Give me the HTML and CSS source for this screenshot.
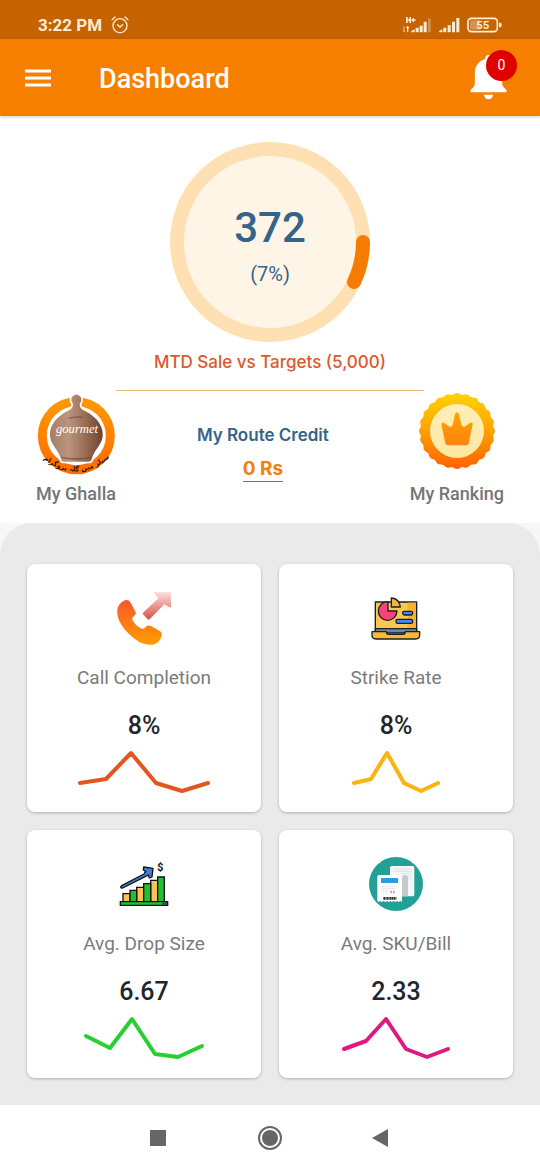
FILE: index.html
```html
<!DOCTYPE html>
<html lang="en">
<head>
<meta charset="utf-8">
<meta name="viewport" content="width=device-width, initial-scale=1">
<title>Dashboard</title>
<link rel="stylesheet" href="styles.css">
</head>
<body>
<div class="status-bar">
  <div class="status-group">
    <span class="status-time">3:22 PM</span>
    <svg class="status-alarm" viewBox="0 0 54 54" aria-hidden="true" fill="none" stroke="currentColor" stroke-width="4" stroke-linecap="round">
      <circle cx="27" cy="29" r="21"/><path d="M19 26l8 7 8-7M3 11l9-8M51 11l-9-8"/>
    </svg>
  </div>
  <div class="status-group">
    <svg class="status-signal-data" viewBox="0 0 87 48" aria-hidden="true" fill="currentColor">
      <path d="M9 0h5v7h5V0h5v18h-5v-7h-5v7H9zM29 3h4v4h5v4h-5v5h-4v-5h-4V7h4zM2 28h2v13h2l-3 5-3-5h2zM12 46V33h-3l5-7 5 7h-3v13z"/>
      <path d="M25 46v-4l10-5v9zM38 46V32h9v14zM50 46V26h9v20zM62 46V14h9v32z"/><path opacity=".35" d="M75 46V4h8v42z"/>
    </svg>
    <svg class="status-signal" viewBox="0 0 63 48" aria-hidden="true" fill="currentColor">
      <path d="M0 46v-4l10-5v9zM13 46V32h9v14zM26 46V25h9v21zM39 46V14h9v32zM52 46V3h9v43z"/>
    </svg>
    <svg class="status-battery" viewBox="0 0 105 48" role="img" aria-label="Battery 55 percent">
      <rect x="3" y="4" width="88" height="40" rx="10" fill="none" stroke="currentColor" stroke-width="5"/>
      <rect x="9" y="10" width="30" height="28" rx="4" fill="currentColor" opacity=".35"/>
      <path d="M96 17h4q4 0 4 7t-4 7h-4z" fill="currentColor"/>
      <text class="battery-text" x="47" y="36" text-anchor="middle">55</text>
    </svg>
  </div>
</div>

<header class="app-bar">
  <button class="icon-button" type="button" aria-label="Open menu">
    <svg class="menu-icon" viewBox="0 0 26 18" aria-hidden="true"><path d="M0 2h26M0 9h26M0 16h26" stroke="#fff" stroke-width="3"/></svg>
  </button>
  <h1 class="app-title">Dashboard</h1>
  <button class="icon-button bell-button" type="button" aria-label="Notifications, 0 new">
    <svg class="bell-icon" viewBox="0 0 108 135" aria-hidden="true" fill="#fff">
      <path d="M54 0c7 0 10 5 10 12 20 6 31 21 31 43v30c0 9 5 13 11 18 3 3 3 8 0 9H2c-3-1-3-6 0-9 6-5 11-9 11-18V55c0-22 11-37 31-43C44 5 47 0 54 0zM40 119h28c-2 9-7 14-14 14s-12-5-14-14z"/>
    </svg>
    <span class="badge">0</span>
  </button>
</header>

<main class="content">
  <section class="summary">
    <div class="gauge">
      <svg class="gauge-ring" viewBox="0 0 200 200" aria-hidden="true">
        <circle cx="100" cy="100" r="93" fill="#fff5e6" stroke="#ffe0b2" stroke-width="14"/>
        <path d="M193 100A93 93 0 0 1 184 140" fill="none" stroke="#f57c00" stroke-width="14" stroke-linecap="round"/>
      </svg>
      <div class="gauge-text">
        <span class="gauge-value">372</span>
        <span class="gauge-percent">(7%)</span>
      </div>
    </div>
    <p class="gauge-label">MTD Sale vs Targets (5,000)</p>
    <hr class="divider">
    <div class="summary-row">
      <a class="tile" href="#ghalla">
        <svg class="ghalla-logo" viewBox="0 0 240 246" aria-hidden="true">
          <defs>
            <linearGradient id="pot" x1="0" x2="1" y1="0" y2="0"><stop offset="0" stop-color="#a57d68"/><stop offset=".35" stop-color="#bc957f"/><stop offset=".7" stop-color="#94694f"/><stop offset="1" stop-color="#6d432e"/></linearGradient>
            <linearGradient id="ring" x1="0" x2="0" y1="0" y2="1"><stop offset="0" stop-color="#ff9800"/><stop offset="1" stop-color="#ff6d00"/></linearGradient>
            <path id="logo-arc" d="M16 194Q121 278 226 190"/>
          </defs>
          <circle cx="121" cy="128" r="102" fill="#fff" stroke="url(#ring)" stroke-width="27"/>
          <path d="M121 5c9 0 15 7 15 15 0 7-5 10-5 15 0 7 4 11 9 15 13 6 27 14 38 26 14 14 24 34 22 54-2 19-15 33-25 49-4 7-7 14-8 20-1 5-4 7-9 7H84c-5 0-8-2-9-7-1-6-4-13-8-20-10-16-23-30-25-49-2-20 8-40 22-54 11-12 25-20 38-26 5-4 9-8 9-15 0-5-5-8-5-15 0-8 6-15 15-15z" fill="url(#pot)" stroke="#fff" stroke-width="10" paint-order="stroke"/>
          <path d="M98 76q22-7 42-3M76 193q45 10 90 0" fill="none" stroke="#633c29" stroke-width="4" opacity=".6"/>
          <text class="logo-name" x="123" y="120" text-anchor="middle">gourmet</text>
          <text class="logo-ring-text"><textPath href="#logo-arc" startOffset="50%" text-anchor="middle">سیلز مین گلہ پروگرام</textPath></text>
        </svg>
        <span class="tile-label">My Ghalla</span>
      </a>
      <div class="credit">
        <span class="credit-title">My Route Credit</span>
        <a class="credit-value" href="#credit">0 Rs</a>
      </div>
      <a class="tile" href="#ranking">
        <svg class="ranking-badge" viewBox="0 0 228 228" aria-hidden="true">
          <defs>
            <linearGradient id="medal" gradientUnits="userSpaceOnUse" x1="0" x2="0" y1="0" y2="228"><stop offset="0" stop-color="#ffd500"/><stop offset=".5" stop-color="#ffa000"/><stop offset="1" stop-color="#ff6200"/></linearGradient>
            <linearGradient id="medal-face" x1="0" x2="0" y1="0" y2="1"><stop offset="0" stop-color="#ffeeb8"/><stop offset="1" stop-color="#ffe9a0"/></linearGradient>
            <linearGradient id="crown" x1="0" x2="0" y1="0" y2="1"><stop offset="0" stop-color="#ffa500"/><stop offset="1" stop-color="#ff8210"/></linearGradient>
          </defs>
          <circle cx="114" cy="114" r="100" pathLength="240" fill="url(#medal)" stroke="url(#medal)" stroke-width="28" stroke-linecap="round" stroke-dasharray="0 10"/>
          <circle cx="114" cy="114" r="110" fill="url(#medal)"/>
          <circle cx="114" cy="114" r="81" fill="url(#medal-face)"/>
          <path d="M67 94q0-7 7-5l18 12q6 2 9-6l7-31q6-13 12 0l7 31q3 8 9 6l18-12q7-2 7 5l-12 57q-1 6-7 6H86q-6 0-7-6z" fill="url(#crown)"/>
        </svg>
        <span class="tile-label">My Ranking</span>
      </a>
    </div>
  </section>

  <section class="panel">
    <article class="card">
      <svg class="card-icon" viewBox="0 0 162 162" aria-hidden="true">
        <defs>
          <linearGradient id="phone" x1="0" x2="0" y1="0" y2="1"><stop offset="0" stop-color="#f7572b"/><stop offset="1" stop-color="#ff9d00"/></linearGradient>
          <linearGradient id="arrow" x1="0" x2="0" y1="0" y2="1"><stop offset="0" stop-color="#fbdfe0"/><stop offset="1" stop-color="#dc5045"/></linearGradient>
        </defs>
        <path d="M19 30c8-5 16-4 21 4l14 25c4 7 2 12-3 16-7 5-6 12-1 18 5 8 12 14 20 18 7 4 11 3 15-2 5-6 11-7 17-4l25 14c8 5 9 10 6 18-4 11-13 22-27 24-23 3-48-10-70-32C15 108-2 82 1 57c1-12 8-21 18-27z" fill="url(#phone)"/>
        <path d="M78 70q-2-3 0-5l46-43-14-17q-1-2 2-2h50v46q-3 1-6-1l-14-8-44 45q-3 2-6 0z" fill="url(#arrow)"/>
      </svg>
      <h2 class="card-label">Call Completion</h2>
      <p class="card-value">8%</p>
      <svg class="spark spark-red" viewBox="0 0 140 44" aria-hidden="true"><polyline points="6,33 32,29 57,3 82,33 108,41 134,33"/></svg>
    </article>

    <article class="card">
      <svg class="card-icon" viewBox="0 0 162 162" aria-hidden="true" stroke="#17212b" stroke-width="4" stroke-linejoin="round">
        <path d="M19 33h124v88H19z" fill="#fdc650"/>
        <path d="M116 35h25v78h-25z" fill="#fbb12f" stroke="none"/>
        <path d="M19 113h124v13H19z" fill="#74849a"/>
        <path d="M9 122h43q1 8 5 8h47q4 0 5-8h43v10q0 12-12 12H21q-12 0-12-12z" fill="#fdb933"/>
        <path d="M57 32v28h27a28 28 0 1 1-27-28z" fill="#f6437c"/>
        <path d="M67 21q24 2 27 27H67z" fill="#fdb62f"/>
        <rect x="101" y="61" width="30" height="11" rx="5" fill="#3f8cf3"/>
        <rect x="81" y="85" width="50" height="12" rx="5" fill="#3f8cf3"/>
      </svg>
      <h2 class="card-label">Strike Rate</h2>
      <p class="card-value">8%</p>
      <svg class="spark spark-amber" viewBox="0 0 140 44" aria-hidden="true"><polyline points="28,33 45,29 61,3 78,33 95,41 112,33"/></svg>
    </article>

    <article class="card">
      <svg class="card-icon" viewBox="0 0 162 162" aria-hidden="true" stroke="#10131c" stroke-width="4">
        <path d="M18 110h21v24H18zM59 91h21v43H59zM101 70h21v64h-21z" fill="#fdc255"/>
        <path d="M39 100h20v34H39zM80 80h21v54H80zM122 60h20v74h-20z" fill="#1fc131"/>
        <path d="M10 134h142v11H10z" fill="#1fc131"/><path d="M136 136h14v7h-14z" fill="#3a3f63" stroke="none"/>
        <path d="M14 86l67-35 5-8-7-4 1-9 28 4-3 26-8 3-3-9-8 4-69 35q-5 1-6-3z" fill="#3f7fd6" stroke-linejoin="round"/>
        <text class="dollar" x="130" y="43" text-anchor="middle">$</text>
      </svg>
      <h2 class="card-label">Avg. Drop Size</h2>
      <p class="card-value">6.67</p>
      <svg class="spark spark-green" viewBox="0 0 140 44" aria-hidden="true"><polyline points="12,20 36,32 58,3 81,38 104,41 128,30"/></svg>
    </article>

    <article class="card">
      <svg class="card-icon" viewBox="0 0 162 162" aria-hidden="true">
        <circle cx="81" cy="81" r="81" fill="#22a095"/>
        <rect x="63" y="27" width="73" height="91" rx="5" fill="#f4f6f7"/>
        <path d="M72 36h55M72 43h55M96 50h31M104 57h23M117 65h10" stroke="#d5d9dc" stroke-width="2"/>
        <path d="M99 118V64q0-10 9-10t9 10v54z" fill="#c6c9cc"/>
        <path d="M30 54h64q5 0 5 5v76l-5-3-5 3-5-3-5 3-5-3-5 3-5-3-5 3-5-3-5 3-5-3-5 3-5-3-5 3-4-3V59q0-5 5-5z" fill="#fff"/>
        <path d="M36 63h51v15H36z" fill="#2a9fe0"/>
        <path d="M37 88h42M37 94h42M37 101h20M37 108h20" stroke="#d5d9dc" stroke-width="2"/>
        <path d="M64 101h5v8h-5zM72 101h5v8h-5z" fill="#ef8d85"/>
        <path d="M43 124h39" stroke="#30353a" stroke-width="8" stroke-dasharray="5 1 3 1"/>
      </svg>
      <h2 class="card-label">Avg. SKU/Bill</h2>
      <p class="card-value">2.33</p>
      <svg class="spark spark-pink" viewBox="0 0 140 44" aria-hidden="true"><polyline points="18,33 40,25 60,3 80,33 101,41 122,33"/></svg>
    </article>
  </section>
</main>

<nav class="system-nav" aria-label="System">
  <button class="nav-button" type="button" aria-label="Recent apps"><svg class="nav-icon" viewBox="0 0 26 26" aria-hidden="true"><path d="M4 5h16v16H4z" fill="#666"/></svg></button>
  <button class="nav-button" type="button" aria-label="Home"><svg class="nav-icon" viewBox="0 0 26 26" aria-hidden="true"><circle cx="13" cy="13" r="11" fill="none" stroke="#666" stroke-width="2"/><circle cx="13" cy="13" r="8" fill="#666"/></svg></button>
  <button class="nav-button" type="button" aria-label="Back"><svg class="nav-icon" viewBox="0 0 26 26" aria-hidden="true"><path d="M4 13l16-9v18z" fill="#666"/></svg></button>
</nav>
</body>
</html>
```
FILE: styles.css
```css
* {
  box-sizing: border-box;
}

body {
  margin: 0;
  min-height: 100vh;
  display: flex;
  flex-direction: column;
  background: #fff;
  font-family: Roboto, sans-serif;
}

h1, h2, p {
  margin: 0;
}

button {
  padding: 0;
  border: 0;
  background: none;
  font: inherit;
  color: inherit;
}

a {
  color: inherit;
  text-decoration: none;
}

svg {
  display: block;
}

.status-bar {
  display: flex;
  justify-content: space-between;
  align-items: flex-end;
  height: 39px;
  padding: 0 38px 3px;
  background: #c46300;
  color: #ffecd6;
}

.status-group {
  display: flex;
  align-items: center;
  gap: 7px;
  height: 23px;
}

.status-time {
  padding-right: 2px;
  font-size: 17px;
  font-weight: 700;
  line-height: 22px;
}

.status-alarm {
  width: 18px;
  height: 18px;
}

.status-signal-data {
  width: 29px;
  height: 16px;
}

.status-signal {
  width: 21px;
  height: 16px;
}

.status-battery {
  width: 35px;
  height: 16px;
}

.battery-text {
  font-size: 34px;
  font-weight: 700;
  fill: currentColor;
}

.app-bar {
  display: flex;
  align-items: center;
  height: 77px;
  padding: 0 33px 0 25px;
  background: #f77f00;
  color: #fff;
  box-shadow: 0 1px 3px rgba(0, 0, 0, 0.2);
  position: relative;
}

.menu-icon {
  width: 26px;
  height: 18px;
}

.app-title {
  flex: 1;
  padding: 2px 0 0 48px;
  font-size: 27px;
  font-weight: 500;
  line-height: 32px;
}

.bell-button {
  position: relative;
}

.bell-icon {
  width: 37px;
  height: 45px;
}

.badge {
  position: absolute;
  top: -5px;
  right: -10px;
  width: 31px;
  height: 31px;
  border-radius: 50%;
  background: #df0000;
  font-size: 14px;
  line-height: 31px;
  text-align: center;
}

.content {
  flex: 1;
  display: flex;
  flex-direction: column;
  background: #f7f7f7;
}

.summary {
  display: flex;
  flex-direction: column;
  align-items: center;
  padding: 26px 36px 17px;
  background: #fff;
}

.gauge {
  display: grid;
  place-items: center;
}

.gauge-ring,
.gauge-text {
  grid-area: 1 / 1;
}

.gauge-ring {
  width: 200px;
  height: 200px;
}

.gauge-text {
  display: flex;
  flex-direction: column;
  align-items: center;
  gap: 10px;
  padding-top: 6px;
  color: #34648a;
}

.gauge-value {
  font-size: 42px;
  font-weight: 500;
  line-height: 48px;
}

.gauge-percent {
  font-size: 20px;
  line-height: 24px;
}

.gauge-label {
  margin-top: 8px;
  font-family: Inter, sans-serif;
  font-size: 17px;
  font-weight: 500;
  line-height: 24px;
  color: #da5a2e;
}

.divider {
  width: 66%;
  height: 1px;
  margin: 16px 0 2px;
  border: 0;
  background: #e5bd80;
}

.summary-row {
  align-self: stretch;
  display: flex;
  justify-content: space-between;
}

.tile {
  display: flex;
  flex-direction: column;
  justify-content: space-between;
  align-items: center;
  gap: 7px;
}

.ghalla-logo {
  width: 80px;
  height: 82px;
}

.logo-name {
  font-family: "Liberation Serif", serif;
  font-size: 38px;
  font-style: italic;
  fill: #fff;
}

.logo-ring-text {
  font-family: "DejaVu Sans", sans-serif;
  font-size: 20px;
  font-weight: 700;
  fill: #301200;
}

.ranking-badge {
  width: 76px;
  height: 76px;
}

.tile-label {
  font-size: 18px;
  font-weight: 500;
  line-height: 24px;
  color: #757575;
}

.credit {
  display: flex;
  flex-direction: column;
  align-items: center;
  gap: 10px;
  padding-top: 30px;
  font-family: Inter, sans-serif;
}

.credit-title {
  font-size: 17px;
  font-weight: 600;
  line-height: 24px;
  color: #34648a;
}

.credit-value {
  border-bottom: 1px solid #757575;
  font-size: 19px;
  font-weight: 700;
  line-height: 24px;
  color: #f0810f;
}

.panel {
  flex: 1;
  display: grid;
  grid-template-columns: 1fr 1fr;
  align-content: start;
  gap: 18px;
  padding: 41px 27px 27px;
  border-radius: 32px 32px 0 0;
  background: #eaeaea;
}

.card {
  display: flex;
  flex-direction: column;
  align-items: center;
  padding: 27px 12px 18px;
  border-radius: 8px;
  background: #fff;
  box-shadow: 0 1px 3px rgba(0, 0, 0, 0.25);
}

.card-icon {
  width: 54px;
  height: 54px;
}

.card-label {
  margin-top: 20px;
  font-size: 19px;
  font-weight: 400;
  line-height: 26px;
  color: #7b7b7b;
}

.card-value {
  margin: 21px 0 10px;
  font-size: 25px;
  font-weight: 500;
  line-height: 28px;
  color: #22262c;
}

.dollar {
  font-size: 32px;
  font-weight: 700;
  stroke: none;
  fill: #10131c;
}

.spark {
  width: 140px;
  height: 44px;
  fill: none;
  stroke-width: 4;
  stroke-linecap: round;
  stroke-linejoin: round;
}

.spark-red {
  stroke: #e2571f;
}

.spark-amber {
  stroke: #fcb30f;
}

.spark-green {
  stroke: #28cf31;
}

.spark-pink {
  stroke: #e01882;
}

.system-nav {
  display: flex;
  justify-content: center;
  align-items: center;
  gap: 63px;
  height: 65px;
  background: #fff;
}

.nav-button {
  width: 48px;
  height: 48px;
  display: grid;
  place-items: center;
}

.nav-icon {
  width: 26px;
  height: 26px;
}
```
